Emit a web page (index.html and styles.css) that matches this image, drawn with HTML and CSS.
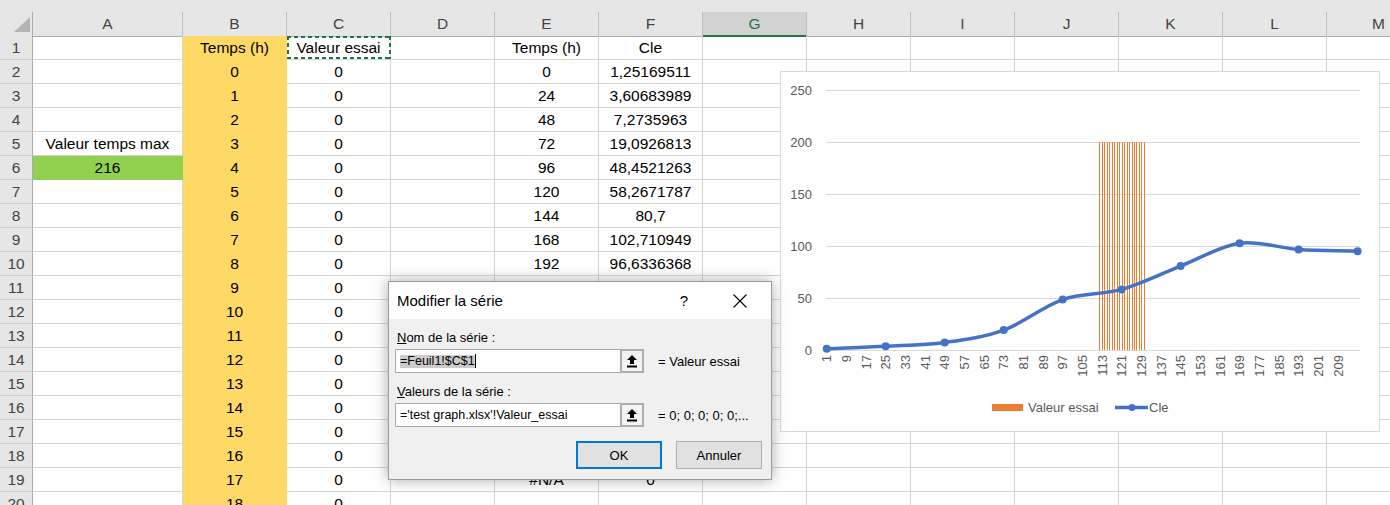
FILE: index.html
```html
<!DOCTYPE html>
<html lang="fr">
<head>
<meta charset="utf-8">
<title>Excel - Modifier la série</title>
<link rel="stylesheet" href="styles.css">
</head>
<body>
<div class="app">
  <div class="topbar"></div>
  <div class="sheet">
    <div class="row colhead">
      <div class="corner"><svg width="33" height="24" viewBox="0 0 33 24"><polygon points="30,5 30,20 14,20" fill="#b4b4b4"/></svg></div>
      <div class="h">A</div><div class="h">B</div><div class="h">C</div><div class="h">D</div><div class="h">E</div><div class="h">F</div><div class="h sel">G</div><div class="h">H</div><div class="h">I</div><div class="h">J</div><div class="h">K</div><div class="h">L</div><div class="h">M</div>
    </div>
    <div class="row"><div class="rh">1</div><div class="c"></div><div class="c y">Temps (h)</div><div class="c ants">Valeur essai</div><div class="c"></div><div class="c">Temps (h)</div><div class="c">Cle</div><div class="c"></div><div class="c"></div><div class="c"></div><div class="c"></div><div class="c"></div><div class="c"></div><div class="c"></div></div>
    <div class="row"><div class="rh">2</div><div class="c"></div><div class="c y">0</div><div class="c">0</div><div class="c"></div><div class="c">0</div><div class="c">1,25169511</div><div class="c"></div><div class="c"></div><div class="c"></div><div class="c"></div><div class="c"></div><div class="c"></div><div class="c"></div></div>
    <div class="row"><div class="rh">3</div><div class="c"></div><div class="c y">1</div><div class="c">0</div><div class="c"></div><div class="c">24</div><div class="c">3,60683989</div><div class="c"></div><div class="c"></div><div class="c"></div><div class="c"></div><div class="c"></div><div class="c"></div><div class="c"></div></div>
    <div class="row"><div class="rh">4</div><div class="c"></div><div class="c y">2</div><div class="c">0</div><div class="c"></div><div class="c">48</div><div class="c">7,2735963</div><div class="c"></div><div class="c"></div><div class="c"></div><div class="c"></div><div class="c"></div><div class="c"></div><div class="c"></div></div>
    <div class="row"><div class="rh">5</div><div class="c">Valeur temps max</div><div class="c y">3</div><div class="c">0</div><div class="c"></div><div class="c">72</div><div class="c">19,0926813</div><div class="c"></div><div class="c"></div><div class="c"></div><div class="c"></div><div class="c"></div><div class="c"></div><div class="c"></div></div>
    <div class="row"><div class="rh">6</div><div class="c g">216</div><div class="c y">4</div><div class="c">0</div><div class="c"></div><div class="c">96</div><div class="c">48,4521263</div><div class="c"></div><div class="c"></div><div class="c"></div><div class="c"></div><div class="c"></div><div class="c"></div><div class="c"></div></div>
    <div class="row"><div class="rh">7</div><div class="c"></div><div class="c y">5</div><div class="c">0</div><div class="c"></div><div class="c">120</div><div class="c">58,2671787</div><div class="c"></div><div class="c"></div><div class="c"></div><div class="c"></div><div class="c"></div><div class="c"></div><div class="c"></div></div>
    <div class="row"><div class="rh">8</div><div class="c"></div><div class="c y">6</div><div class="c">0</div><div class="c"></div><div class="c">144</div><div class="c">80,7</div><div class="c"></div><div class="c"></div><div class="c"></div><div class="c"></div><div class="c"></div><div class="c"></div><div class="c"></div></div>
    <div class="row"><div class="rh">9</div><div class="c"></div><div class="c y">7</div><div class="c">0</div><div class="c"></div><div class="c">168</div><div class="c">102,710949</div><div class="c"></div><div class="c"></div><div class="c"></div><div class="c"></div><div class="c"></div><div class="c"></div><div class="c"></div></div>
    <div class="row"><div class="rh">10</div><div class="c"></div><div class="c y">8</div><div class="c">0</div><div class="c"></div><div class="c">192</div><div class="c">96,6336368</div><div class="c"></div><div class="c"></div><div class="c"></div><div class="c"></div><div class="c"></div><div class="c"></div><div class="c"></div></div>
    <div class="row"><div class="rh">11</div><div class="c"></div><div class="c y">9</div><div class="c">0</div><div class="c"></div><div class="c"></div><div class="c"></div><div class="c"></div><div class="c"></div><div class="c"></div><div class="c"></div><div class="c"></div><div class="c"></div><div class="c"></div></div>
    <div class="row"><div class="rh">12</div><div class="c"></div><div class="c y">10</div><div class="c">0</div><div class="c"></div><div class="c"></div><div class="c"></div><div class="c"></div><div class="c"></div><div class="c"></div><div class="c"></div><div class="c"></div><div class="c"></div><div class="c"></div></div>
    <div class="row"><div class="rh">13</div><div class="c"></div><div class="c y">11</div><div class="c">0</div><div class="c"></div><div class="c"></div><div class="c"></div><div class="c"></div><div class="c"></div><div class="c"></div><div class="c"></div><div class="c"></div><div class="c"></div><div class="c"></div></div>
    <div class="row"><div class="rh">14</div><div class="c"></div><div class="c y">12</div><div class="c">0</div><div class="c"></div><div class="c"></div><div class="c"></div><div class="c"></div><div class="c"></div><div class="c"></div><div class="c"></div><div class="c"></div><div class="c"></div><div class="c"></div></div>
    <div class="row"><div class="rh">15</div><div class="c"></div><div class="c y">13</div><div class="c">0</div><div class="c"></div><div class="c"></div><div class="c"></div><div class="c"></div><div class="c"></div><div class="c"></div><div class="c"></div><div class="c"></div><div class="c"></div><div class="c"></div></div>
    <div class="row"><div class="rh">16</div><div class="c"></div><div class="c y">14</div><div class="c">0</div><div class="c"></div><div class="c"></div><div class="c"></div><div class="c"></div><div class="c"></div><div class="c"></div><div class="c"></div><div class="c"></div><div class="c"></div><div class="c"></div></div>
    <div class="row"><div class="rh">17</div><div class="c"></div><div class="c y">15</div><div class="c">0</div><div class="c"></div><div class="c"></div><div class="c"></div><div class="c"></div><div class="c"></div><div class="c"></div><div class="c"></div><div class="c"></div><div class="c"></div><div class="c"></div></div>
    <div class="row"><div class="rh">18</div><div class="c"></div><div class="c y">16</div><div class="c">0</div><div class="c"></div><div class="c"></div><div class="c"></div><div class="c"></div><div class="c"></div><div class="c"></div><div class="c"></div><div class="c"></div><div class="c"></div><div class="c"></div></div>
    <div class="row"><div class="rh">19</div><div class="c"></div><div class="c y">17</div><div class="c">0</div><div class="c"></div><div class="c">#N/A</div><div class="c">0</div><div class="c"></div><div class="c"></div><div class="c"></div><div class="c"></div><div class="c"></div><div class="c"></div><div class="c"></div></div>
    <div class="row"><div class="rh">20</div><div class="c"></div><div class="c y">18</div><div class="c">0</div><div class="c"></div><div class="c"></div><div class="c"></div><div class="c"></div><div class="c"></div><div class="c"></div><div class="c"></div><div class="c"></div><div class="c"></div><div class="c"></div></div>
  </div>

  <svg class="chart" width="600" height="361" viewBox="0 0 600 361">
    <rect x="0.5" y="0.5" width="599" height="360" fill="#fff" stroke="#d9d9d9"/>
    <g stroke="#d9d9d9" stroke-width="1">
      <line x1="46" y1="19.5" x2="580" y2="19.5"/>
      <line x1="46" y1="71.5" x2="580" y2="71.5"/>
      <line x1="46" y1="123.5" x2="580" y2="123.5"/>
      <line x1="46" y1="175.5" x2="580" y2="175.5"/>
      <line x1="46" y1="227.5" x2="580" y2="227.5"/>
      <line x1="46" y1="279.5" x2="580" y2="279.5"/>
    </g>
    <g class="ylab" text-anchor="end">
      <text x="32" y="24">250</text>
      <text x="32" y="76">200</text>
      <text x="32" y="128">150</text>
      <text x="32" y="180">100</text>
      <text x="32" y="232">50</text>
      <text x="32" y="284">0</text>
    </g>
    <g fill="#ed7d31">
      <rect x="319" y="71" width="1" height="208"/>
      <rect x="322" y="71" width="1" height="208"/>
      <rect x="324" y="71" width="1" height="208"/>
      <rect x="327" y="71" width="1" height="208"/>
      <rect x="329" y="71" width="1" height="208"/>
      <rect x="332" y="71" width="1" height="208"/>
      <rect x="334" y="71" width="1" height="208"/>
      <rect x="337" y="71" width="1" height="208"/>
      <rect x="339" y="71" width="1" height="208"/>
      <rect x="342" y="71" width="1" height="208"/>
      <rect x="344" y="71" width="1" height="208"/>
      <rect x="347" y="71" width="1" height="208"/>
      <rect x="349" y="71" width="1" height="208"/>
      <rect x="352" y="71" width="1" height="208"/>
      <rect x="354" y="71" width="1" height="208"/>
      <rect x="356" y="71" width="1" height="208"/>
      <rect x="359" y="71" width="1" height="208"/>
      <rect x="361" y="71" width="1" height="208"/>
      <rect x="364" y="71" width="1" height="208"/>
    </g>
    <path d="M46.7,277.7 C66.4,276.87 86.0,276.25 105.7,275.2 C125.4,274.15 145.0,274.08 164.7,271.4 C184.4,268.72 204.0,266.23 223.7,259.1 C243.4,251.97 263.0,235.38 282.7,228.6 C302.4,221.82 321.9,223.98 341.6,218.4 C361.3,212.82 380.9,202.8 400.6,195.1 C420.3,187.4 439.9,174.97 459.6,172.2 C479.3,169.43 498.9,177.17 518.6,178.5 C538.3,179.83 557.9,179.63 577.6,180.2" fill="none" stroke="#4472c4" stroke-width="3.5" stroke-linecap="round" stroke-linejoin="round"/>
    <g fill="#4472c4">
      <circle cx="46.7" cy="277.7" r="4"/>
      <circle cx="105.7" cy="275.2" r="4"/>
      <circle cx="164.7" cy="271.4" r="4"/>
      <circle cx="223.7" cy="259.1" r="4"/>
      <circle cx="282.7" cy="228.6" r="4"/>
      <circle cx="341.6" cy="218.4" r="4"/>
      <circle cx="400.6" cy="195.1" r="4"/>
      <circle cx="459.6" cy="172.2" r="4"/>
      <circle cx="518.6" cy="178.5" r="4"/>
      <circle cx="577.6" cy="180.2" r="4"/>
    </g>
    <g class="xlab" text-anchor="end" dominant-baseline="central">
      <text transform="translate(46.7 284) rotate(-90)">1</text>
      <text transform="translate(66.4 284) rotate(-90)">9</text>
      <text transform="translate(86.1 284) rotate(-90)">17</text>
      <text transform="translate(105.7 284) rotate(-90)">25</text>
      <text transform="translate(125.4 284) rotate(-90)">33</text>
      <text transform="translate(145.1 284) rotate(-90)">41</text>
      <text transform="translate(164.7 284) rotate(-90)">49</text>
      <text transform="translate(184.4 284) rotate(-90)">57</text>
      <text transform="translate(204.0 284) rotate(-90)">65</text>
      <text transform="translate(223.7 284) rotate(-90)">73</text>
      <text transform="translate(243.4 284) rotate(-90)">81</text>
      <text transform="translate(263.0 284) rotate(-90)">89</text>
      <text transform="translate(282.7 284) rotate(-90)">97</text>
      <text transform="translate(302.4 284) rotate(-90)">105</text>
      <text transform="translate(322.0 284) rotate(-90)">113</text>
      <text transform="translate(341.7 284) rotate(-90)">121</text>
      <text transform="translate(361.4 284) rotate(-90)">129</text>
      <text transform="translate(381.0 284) rotate(-90)">137</text>
      <text transform="translate(400.7 284) rotate(-90)">145</text>
      <text transform="translate(420.4 284) rotate(-90)">153</text>
      <text transform="translate(440.0 284) rotate(-90)">161</text>
      <text transform="translate(459.7 284) rotate(-90)">169</text>
      <text transform="translate(479.4 284) rotate(-90)">177</text>
      <text transform="translate(499.0 284) rotate(-90)">185</text>
      <text transform="translate(518.7 284) rotate(-90)">193</text>
      <text transform="translate(538.3 284) rotate(-90)">201</text>
      <text transform="translate(558.0 284) rotate(-90)">209</text>
    </g>
    <rect x="212" y="333" width="31" height="7" fill="#ed7d31"/>
    <text class="legend" x="248" y="341">Valeur essai</text>
    <line x1="335" y1="336.5" x2="368" y2="336.5" stroke="#4472c4" stroke-width="3.5"/>
    <circle cx="352" cy="336.5" r="3.5" fill="#4472c4"/>
    <text class="legend" x="369" y="341">Cle</text>
  </svg>

  <div class="dialog">
    <div class="dlg-title">
      <span class="dlg-name">Modifier la série</span>
      <span class="dlg-help">?</span>
      <svg class="dlg-close" width="14" height="14" viewBox="0 0 14 14"><path d="M0.5 0.5 L13.5 13.5 M13.5 0.5 L0.5 13.5" stroke="#000" stroke-width="1.1"/></svg>
    </div>
    <div class="dlg-body">
      <div class="dlg-label"><u>N</u>om de la série :</div>
      <div class="dlg-field">
        <div class="refedit">
          <span class="ref-text"><span class="sel">=Feuil1!$C$1</span><span class="caret"></span></span>
          <span class="ref-btn"><svg width="12" height="14" viewBox="0 0 12 14"><path d="M6 1 L11 6 L8 6 L8 10 L4 10 L4 6 L1 6 Z" fill="#000"/><rect x="1" y="11.5" width="10" height="2" fill="#000"/></svg></span>
        </div>
        <span class="ref-value">= Valeur essai</span>
      </div>
      <div class="dlg-label"><u>V</u>aleurs de la série :</div>
      <div class="dlg-field">
        <div class="refedit">
          <span class="ref-text">='test graph.xlsx'!Valeur_essai</span>
          <span class="ref-btn"><svg width="12" height="14" viewBox="0 0 12 14"><path d="M6 1 L11 6 L8 6 L8 10 L4 10 L4 6 L1 6 Z" fill="#000"/><rect x="1" y="11.5" width="10" height="2" fill="#000"/></svg></span>
        </div>
        <span class="ref-value">= 0; 0; 0; 0; 0;...</span>
      </div>
      <div class="dlg-buttons">
        <button class="btn btn-default">OK</button>
        <button class="btn">Annuler</button>
      </div>
    </div>
  </div>
</div>
</body>
</html>
```

FILE: styles.css
```css
* { box-sizing: border-box; }
html, body { margin: 0; padding: 0; }
body {
  width: 1390px;
  height: 505px;
  overflow: hidden;
  background: #fff;
  font-family: "Liberation Sans", Arial, sans-serif;
}
.app {
  position: relative;
  width: 1390px;
  height: 505px;
  overflow: hidden;
}
.topbar { height: 12px; background: #e6e6e6; }

.row {
  display: grid;
  grid-template-columns: 33px 150px repeat(12, 104px);
  height: 24px;
}
.corner {
  background: #e6e6e6;
  border-right: 1px solid #ababab;
  border-bottom: 1px solid #ababab;
}
.corner svg { display: block; }
.h {
  background: #e6e6e6;
  border-right: 1px solid #bdbdbd;
  border-bottom: 1px solid #ababab;
  display: flex;
  align-items: center;
  justify-content: center;
  font-size: 15.5px;
  color: #444;
}
.h.sel {
  background: #d2d2d2;
  border-bottom: 2px solid #217346;
  color: #217346;
}
.rh {
  background: #e6e6e6;
  border-right: 1px solid #ababab;
  border-bottom: 1px solid #cfcfcf;
  display: flex;
  align-items: center;
  justify-content: center;
  font-size: 15.5px;
  color: #444;
}
.c {
  border-right: 1px solid #d4d4d4;
  border-bottom: 1px solid #d4d4d4;
  display: flex;
  align-items: center;
  justify-content: center;
  font-size: 15.5px;
  color: #000;
  white-space: nowrap;
}
.c.y { background: #ffd966; border-color: #ffd966; }
.c.g { background: #92d050; border-color: #92d050; }
.c.ants { position: relative; }
.c.ants::after {
  content: "";
  position: absolute;
  top: 0;
  left: 0;
  right: -1px;
  bottom: 0;
  background-image:
    repeating-linear-gradient(90deg, #217346 0 4px, transparent 4px 7px),
    repeating-linear-gradient(90deg, #217346 0 4px, transparent 4px 7px),
    repeating-linear-gradient(180deg, #217346 0 4px, transparent 4px 7px),
    repeating-linear-gradient(180deg, #217346 0 4px, transparent 4px 7px);
  background-size: 100% 2px, 100% 2px, 2px 100%, 2px 100%;
  background-position: left top, left bottom, left top, right top;
  background-repeat: no-repeat;
}

/* chart */
.chart {
  position: absolute;
  left: 780px;
  top: 71px;
}
.chart text {
  font-family: "Liberation Sans", Arial, sans-serif;
  font-size: 13px;
  fill: #595959;
}

/* dialog */
.dialog {
  position: absolute;
  left: 388px;
  top: 281px;
  width: 384px;
  background: #f0f0f0;
  border: 1px solid #9a9a9a;
  box-shadow: 0 0 14px rgba(0, 0, 0, 0.33);
  color: #000;
}
.dlg-title {
  height: 37px;
  background: #fff;
  display: flex;
  align-items: center;
  padding: 0 24px 0 8px;
  font-size: 15px;
}
.dlg-name { flex: 1; }
.dlg-help { margin-right: 45px; }
.dlg-close { display: block; }
.dlg-body { padding: 10px 9px 10px 6px; }
.dlg-label {
  margin-left: 2px;
  height: 18px;
  line-height: 18px;
  font-size: 13px;
}
.dlg-label + .dlg-field { margin-top: 2px; }
.dlg-field + .dlg-label { margin-top: 10px; }
.dlg-field {
  display: flex;
  align-items: center;
  gap: 14px;
  height: 24px;
}
.refedit {
  width: 249px;
  height: 24px;
  display: flex;
  background: #fff;
  border: 1px solid #a9a9a9;
}
.ref-text {
  flex: 1;
  display: flex;
  align-items: center;
  padding-left: 4px;
  font-size: 12.5px;
  white-space: nowrap;
}
.sel { background: #cccccc; line-height: 13px; }
.caret { width: 1px; height: 14px; background: #000; }
.ref-btn {
  width: 24px;
  height: 24px;
  margin: -1px -1px -1px 0;
  border: 2px solid #adadad;
  background: #f3f3f3;
  display: flex;
  align-items: center;
  justify-content: center;
}
.ref-btn svg { display: block; }
.ref-value { font-size: 13px; white-space: nowrap; }
.dlg-buttons {
  display: flex;
  justify-content: flex-end;
  gap: 14px;
  margin-top: 14px;
}
.btn {
  width: 86px;
  height: 28px;
  padding: 0;
  background: #e1e1e1;
  border: 1px solid #adadad;
  font-family: "Liberation Sans", Arial, sans-serif;
  font-size: 13px;
  color: #000;
}
.btn-default { border: 2px solid #0078d7; }
```
